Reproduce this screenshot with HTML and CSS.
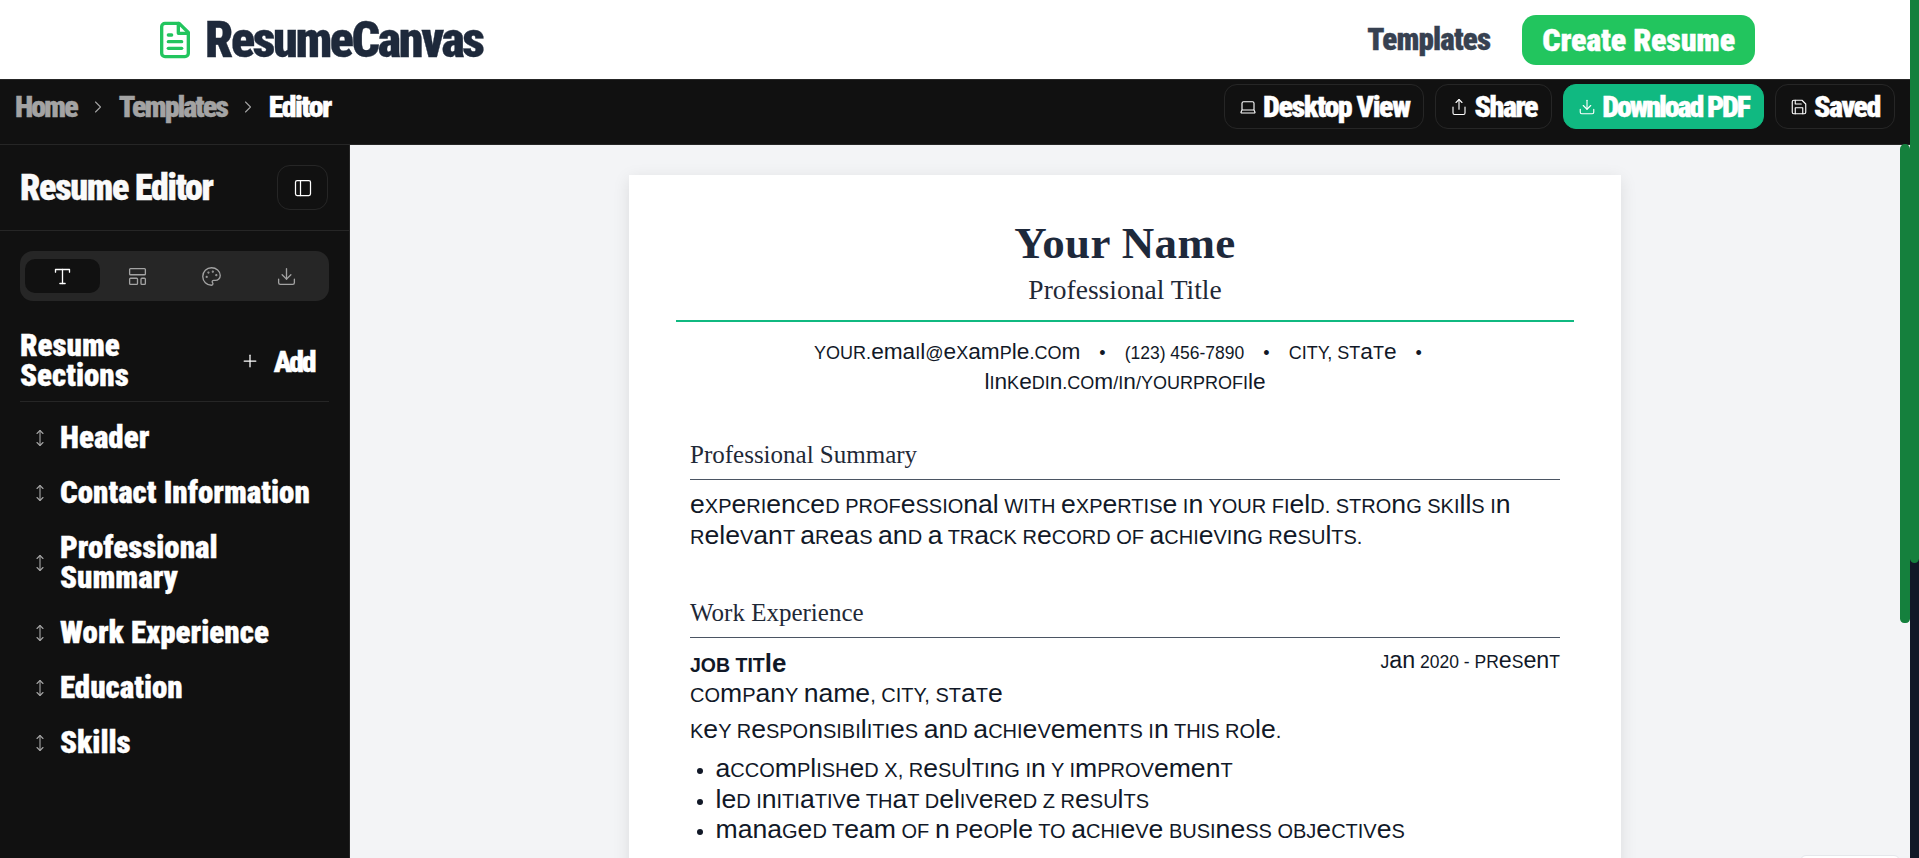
FILE: index.html
```html
<!DOCTYPE html>
<html lang="en">
<head>
<meta charset="utf-8">
<title>ResumeCanvas</title>
<link rel="stylesheet" href="styles.css">
</head>
<body>
<svg class="sprite" aria-hidden="true">
  <symbol id="i-file" viewBox="0 0 24 24"><path d="M14.5 2H6a2 2 0 0 0-2 2v16a2 2 0 0 0 2 2h12a2 2 0 0 0 2-2V7.500z"/><polyline points="14 2 14 8 20 8"/><line x1="16" y1="13" x2="8" y2="13"/><line x1="16" y1="17" x2="8" y2="17"/><line x1="10" y1="9" x2="8" y2="9"/></symbol>
  <symbol id="i-chev" viewBox="0 0 24 24"><path d="m9 18 6-6-6-6"/></symbol>
  <symbol id="i-laptop" viewBox="0 0 24 24"><path d="M20 16V7a2 2 0 0 0-2-2H6a2 2 0 0 0-2 2v9m16 0H4m16 0 1.280 2.550a1 1 0 0 1-.9 1.450H3.620a1 1 0 0 1-.9-1.450L4 16"/></symbol>
  <symbol id="i-share" viewBox="0 0 24 24"><path d="M4 12v8a2 2 0 0 0 2 2h12a2 2 0 0 0 2-2v-8"/><polyline points="16 6 12 2 8 6"/><line x1="12" y1="2" x2="12" y2="15"/></symbol>
  <symbol id="i-down" viewBox="0 0 24 24"><path d="M21 15v4a2 2 0 0 1-2 2H5a2 2 0 0 1-2-2v-4"/><polyline points="7 10 12 15 17 10"/><line x1="12" y1="15" x2="12" y2="3"/></symbol>
  <symbol id="i-save" viewBox="0 0 24 24"><path d="M19 21H5a2 2 0 0 1-2-2V5a2 2 0 0 1 2-2h11l5 5v11a2 2 0 0 1-2 2z"/><polyline points="17 21 17 13 7 13 7 21"/><polyline points="7 3 7 8 15 8"/></symbol>
  <symbol id="i-panel" viewBox="0 0 24 24"><rect x="3" y="3" width="18" height="18" rx="2"/><path d="M9 3v18"/></symbol>
  <symbol id="i-type" viewBox="0 0 24 24"><polyline points="4 7 4 4 20 4 20 7"/><line x1="9" y1="20" x2="15" y2="20"/><line x1="12" y1="4" x2="12" y2="20"/></symbol>
  <symbol id="i-layout" viewBox="0 0 24 24"><rect x="3" y="3" width="18" height="7" rx="1"/><rect x="3" y="14" width="9" height="7" rx="1"/><rect x="16" y="14" width="5" height="7" rx="1"/></symbol>
  <symbol id="i-palette" viewBox="0 0 24 24"><circle cx="13.500" cy="6.500" r=".5"/><circle cx="17.500" cy="10.500" r=".5"/><circle cx="8.500" cy="7.500" r=".5"/><circle cx="6.500" cy="12.500" r=".5"/><path d="M12 2C6.500 2 2 6.500 2 12s4.500 10 10 10c.926 0 1.648-.746 1.648-1.688 0-.437-.18-.835-.437-1.125-.29-.289-.438-.652-.438-1.125a1.640 1.640 0 0 1 1.668-1.668h1.996c3.051 0 5.555-2.503 5.555-5.554C21.965 6.012 17.461 2 12 2z"/></symbol>
  <symbol id="i-plus" viewBox="0 0 24 24"><path d="M5 12h14"/><path d="M12 5v14"/></symbol>
  <symbol id="i-move" viewBox="0 0 24 24"><polyline points="8 18 12 22 16 18"/><polyline points="8 6 12 2 16 6"/><line x1="12" y1="2" x2="12" y2="22"/></symbol>
</svg>

<div class="app">
  <header class="nav">
    <a class="brand"><svg class="ico ico-logo"><use href="#i-file"/></svg><span class="brand-name">ResumeCanvas</span></a>
    <nav class="nav-links">
      <a class="nav-link">Templates</a>
      <a class="cta">Create Resume</a>
    </nav>
  </header>

  <div class="toolbar">
    <div class="crumbs">
      <a class="crumb">Home</a><svg class="ico ico-chev"><use href="#i-chev"/></svg>
      <a class="crumb">Templates</a><svg class="ico ico-chev"><use href="#i-chev"/></svg>
      <span class="crumb crumb-now">Editor</span>
    </div>
    <div class="actions">
      <button class="btn"><svg class="ico ico-btn"><use href="#i-laptop"/></svg>Desktop View</button>
      <button class="btn"><svg class="ico ico-btn"><use href="#i-share"/></svg>Share</button>
      <button class="btn btn-green"><svg class="ico ico-btn"><use href="#i-down"/></svg>Download PDF</button>
      <button class="btn"><svg class="ico ico-btn"><use href="#i-save"/></svg>Saved</button>
    </div>
  </div>

  <div class="workspace">
    <aside class="side">
      <div class="side-head">
        <h2 class="side-title">Resume Editor</h2>
        <button class="side-toggle"><svg class="ico ico-toggle"><use href="#i-panel"/></svg></button>
      </div>
      <div class="side-body">
        <div class="tabs">
          <button class="tab tab-on"><svg class="ico ico-tab"><use href="#i-type"/></svg></button>
          <button class="tab"><svg class="ico ico-tab"><use href="#i-layout"/></svg></button>
          <button class="tab"><svg class="ico ico-tab"><use href="#i-palette"/></svg></button>
          <button class="tab"><svg class="ico ico-tab"><use href="#i-down"/></svg></button>
        </div>
        <div class="sec-head">
          <h3 class="sec-title">Resume Sections</h3>
          <button class="add"><svg class="ico ico-plus"><use href="#i-plus"/></svg>Add</button>
        </div>
        <ul class="sec-list">
          <li class="sec-item"><svg class="ico ico-move"><use href="#i-move"/></svg><span>Header</span></li>
          <li class="sec-item"><svg class="ico ico-move"><use href="#i-move"/></svg><span>Contact Information</span></li>
          <li class="sec-item"><svg class="ico ico-move"><use href="#i-move"/></svg><span>Professional<br>Summary</span></li>
          <li class="sec-item"><svg class="ico ico-move"><use href="#i-move"/></svg><span>Work Experience</span></li>
          <li class="sec-item"><svg class="ico ico-move"><use href="#i-move"/></svg><span>Education</span></li>
          <li class="sec-item"><svg class="ico ico-move"><use href="#i-move"/></svg><span>Skills</span></li>
        </ul>
      </div>
    </aside>

    <main class="canvas">
      <article class="paper">
        <header class="cv-head">
          <h1 class="cv-name">Your Name</h1>
          <p class="cv-role">Professional Title</p>
        </header>
        <div class="cv-contact uc">
          <span>your.<i>ema</i>i<i>l</i>@<i>e</i>x<i>am</i>p<i>le</i>.co<i>m</i></span>
          <span class="sep">•</span>
          <span class="cv-phone">(123) 456-7890</span>
          <span class="sep">•</span>
          <span>City, St<i>a</i>t<i>e</i></span>
          <span class="sep">•</span>
          <span class="cv-link"><i>l</i>i<i>n</i>k<i>e</i>di<i>n</i>.co<i>m</i>/i<i>n</i>/yourprofi<i>le</i></span>
        </div>

        <section class="cv-sec">
          <h2 class="cv-sec-title">Professional Summary</h2>
          <p class="cv-text uc"><i>E</i>xp<i>e</i>ri<i>en</i>c<i>e</i>d prof<i>e</i>ssio<i>nal</i> with <i>e</i>xp<i>e</i>rtis<i>e</i> i<i>n</i> your fi<i>el</i>d. Stro<i>n</i>g ski<i>ll</i>s i<i>n</i> r<i>ele</i>v<i>an</i>t <i>a</i>r<i>ea</i>s <i>an</i>d <i>a</i> tr<i>a</i>ck r<i>e</i>cord of <i>a</i>chi<i>e</i>vi<i>n</i>g r<i>e</i>su<i>l</i>ts.</p>
        </section>

        <section class="cv-sec">
          <h2 class="cv-sec-title">Work Experience</h2>
          <div class="job-top uc">
            <strong class="job-title">Job Tit<i>le</i></strong>
            <span class="job-date">J<i>an</i> 2020 - Pr<i>e</i>s<i>en</i>t</span>
          </div>
          <p class="cv-text uc">Co<i>m</i>p<i>an</i>y <i>Name</i>, City, St<i>a</i>t<i>e</i></p>
          <p class="cv-text job-desc uc">K<i>e</i>y r<i>e</i>spo<i>n</i>sibi<i>l</i>iti<i>e</i>s <i>an</i>d <i>a</i>chi<i>e</i>v<i>emen</i>ts i<i>n</i> this ro<i>le</i>.</p>
          <ul class="cv-list uc">
            <li><i>A</i>cco<i>m</i>p<i>l</i>ish<i>e</i>d X, r<i>e</i>su<i>l</i>ti<i>n</i>g i<i>n</i> Y i<i>m</i>prov<i>emen</i>t</li>
            <li><i>Le</i>d i<i>n</i>iti<i>a</i>tiv<i>e</i> th<i>a</i>t d<i>el</i>iv<i>e</i>r<i>e</i>d Z r<i>e</i>su<i>l</i>ts</li>
            <li><i>Mana</i>g<i>e</i>d t<i>eam</i> of <i>N</i> p<i>e</i>op<i>le</i> to <i>a</i>chi<i>e</i>v<i>e</i> busi<i>ne</i>ss obj<i>e</i>ctiv<i>e</i>s</li>
          </ul>
        </section>
      </article>
      <div class="corner-card"></div>
    </main>
  </div>
  <div class="thumb-inner"></div>
</div>
<div class="page-bar"><div class="page-thumb"></div></div>
</body>
</html>
```
FILE: styles.css
```css
* { box-sizing: border-box; }
html, body { height: 100%; }
body { margin: 0; overflow: hidden; background: #f3f4f6; font-family: Roboto, "Liberation Sans", sans-serif; }
.sprite { display: none; }
h1, h2, h3, p, ul { margin: 0; padding: 0; }
button { font: inherit; color: inherit; background: none; border: 0; padding: 0; }

.ico { fill: none; stroke: currentColor; stroke-width: 2; stroke-linecap: round; stroke-linejoin: round; flex: none; }
.ico-logo { width: 40px; height: 40px; color: #22c55e; margin-left: 2px; }
.ico-chev { width: 20px; height: 20px; color: #a3a3a3; stroke-width: 1.300; }
.ico-btn { width: 18px; height: 18px; stroke-width: 1.500; }
.ico-toggle { width: 20px; height: 20px; stroke-width: 1.500; }
.ico-tab { width: 21px; height: 21px; stroke-width: 1.500; }
.ico-plus { width: 20px; height: 20px; stroke-width: 1.500; }
.ico-move { width: 18px; height: 18px; color: #a3a3a3; stroke-width: 1.500; }

.app { position: relative; width: 1910px; height: 100%; display: flex; flex-direction: column; }

.brand-name, .nav-link, .cta, .crumb, .btn, .side-title, .sec-title, .add, .sec-item span {
  font-family: Roboto, sans-serif; font-weight: 900; font-stretch: 75%; -webkit-text-stroke: .35px currentColor;
}

.nav { flex: none; height: 79px; background: #fff; display: flex; align-items: center; justify-content: space-between; padding: 0 155px 0 153px; }
.brand { display: flex; align-items: center; gap: 10px; }
.brand-name { font-size: 50px; line-height: 56px; letter-spacing: -2.400px; color: #1e293b; }
.nav-links { display: flex; align-items: center; gap: 32px; }
.nav-link { font-size: 31px; letter-spacing: -.8px; color: #374151; }
.cta { display: flex; align-items: center; height: 50px; padding: 0 20px; border-radius: 14px; background: #22c55e; color: #fff; font-size: 32px; letter-spacing: -.2px; }

.toolbar { flex: none; height: 66px; background: #111; border-top: 1px solid #262626; border-bottom: 1px solid #262626; display: flex; align-items: flex-start; justify-content: space-between; padding: 4px 15px 0; }
.crumbs { display: flex; align-items: center; gap: 11px; height: 45px; }
.crumb { font-size: 30px; letter-spacing: -2px; color: #a3a3a3; }
.crumb-now { color: #fff; letter-spacing: -1.500px; }
.actions { display: flex; gap: 11px; }
.btn { display: flex; align-items: center; gap: 6px; height: 45px; padding: 0 14px; border: 1px solid #262626; border-radius: 13px; color: #fff; font-size: 30px; letter-spacing: -1.450px; white-space: nowrap; }
.btn-green { background: #10b981; border-color: #10b981; letter-spacing: -2.100px; }

.workspace { flex: 1; min-height: 0; display: flex; }
.side { flex: none; width: 350px; background: #111; border-right: 1px solid #262626; color: #fff; }
.side-head { height: 86px; display: flex; align-items: center; justify-content: space-between; padding: 0 21px 0 20px; border-bottom: 1px solid #262626; }
.side-title { font-size: 36px; letter-spacing: -1.300px; color: #fafafa; }
.side-toggle { width: 51px; height: 45px; display: flex; align-items: center; justify-content: center; border: 1px solid #262626; border-radius: 13px; }
.side-body { padding: 20px 20px 0; }
.tabs { height: 50px; padding: 8px 5px; display: flex; background: #262626; border-radius: 13px; }
.tab { flex: 1; display: flex; align-items: center; justify-content: center; border-radius: 10px; color: #a3a3a3; }
.tab-on { background: #111; color: #fff; }
.sec-head { display: flex; align-items: center; justify-content: space-between; padding: 30px 15px 10px 0; border-bottom: 1px solid #262626; }
.sec-title { width: 140px; font-size: 31px; line-height: 30px; letter-spacing: 0; }
.add { display: flex; align-items: center; gap: 14px; color: #fff; font-size: 30px; letter-spacing: -2.500px; }
.sec-list { list-style: none; padding-top: 8px; }
.sec-item { display: flex; align-items: center; gap: 11px; padding: 12.500px 10px 12.500px 11px; font-size: 31px; line-height: 30px; }
.sec-item span { letter-spacing: 0; }

.canvas { position: relative; flex: 1; min-width: 0; padding: 30px 10px 0 0; overflow: hidden; background: #f3f4f6; }
.paper { width: 992px; height: 1300px; margin: 0 auto; padding: 44px 47px; background: #fff; box-shadow: 0 4px 16px rgba(0,0,0,.1); color: #111827; }
.corner-card { position: absolute; right: 10px; bottom: -20px; width: 100px; height: 23px; background: #fff; border: 1px solid #e5e7eb; border-radius: 6px; }

.cv-head { text-align: center; padding-bottom: 14px; border-bottom: 2px solid #10b981; font-family: "Liberation Serif", serif; }
.cv-name { font-size: 45px; line-height: 48px; letter-spacing: .4px; font-weight: 700; color: #1e293b; }
.cv-role { margin-top: 7px; font-size: 27.500px; line-height: 32px; color: #1f2937; }

.uc { font-family: "Liberation Sans", sans-serif; text-transform: uppercase; }
.uc i { font-style: normal; font-size: 1.330em; line-height: 0; text-transform: lowercase; }

.cv-contact { margin-top: 16px; text-align: center; font-size: 18px; line-height: 30px; }
.cv-contact i { font-size: 1.260em; }
.cv-contact .sep { margin: 0 14px; }
.cv-phone { font-size: 17.500px; }
.cv-link { display: block; }

.cv-sec { margin: 42px 14px 0; }
.cv-sec + .cv-sec { margin-top: 46px; }
.cv-sec-title { font-family: "Liberation Serif", serif; font-weight: 400; font-size: 25px; line-height: 30px; color: #1f2937; padding-bottom: 9px; border-bottom: 1px solid #4b5563; margin-bottom: 11px; }
.cv-text { font-size: 20px; line-height: 30.500px; }
.job-top { display: flex; justify-content: space-between; align-items: flex-start; margin-top: 12px; }
.job-title { font-size: 19.500px; line-height: 30px; }
.job-date { font-size: 17.500px; line-height: 24px; }
.job-desc { line-height: 40px; }
.cv-list { margin-top: 4.500px; padding-left: 25.500px; font-size: 20px; line-height: 30.500px; }

.thumb-inner { position: absolute; right: 0; top: 144px; width: 10px; height: 479px; background: #15803d; border-radius: 6px 6px 5px 5px; }
.page-bar { position: fixed; top: 0; right: 0; width: 9px; height: 100%; background: #111827; }
.page-thumb { height: 563px; background: #15803d; border-radius: 0 0 5px 5px; }
```
